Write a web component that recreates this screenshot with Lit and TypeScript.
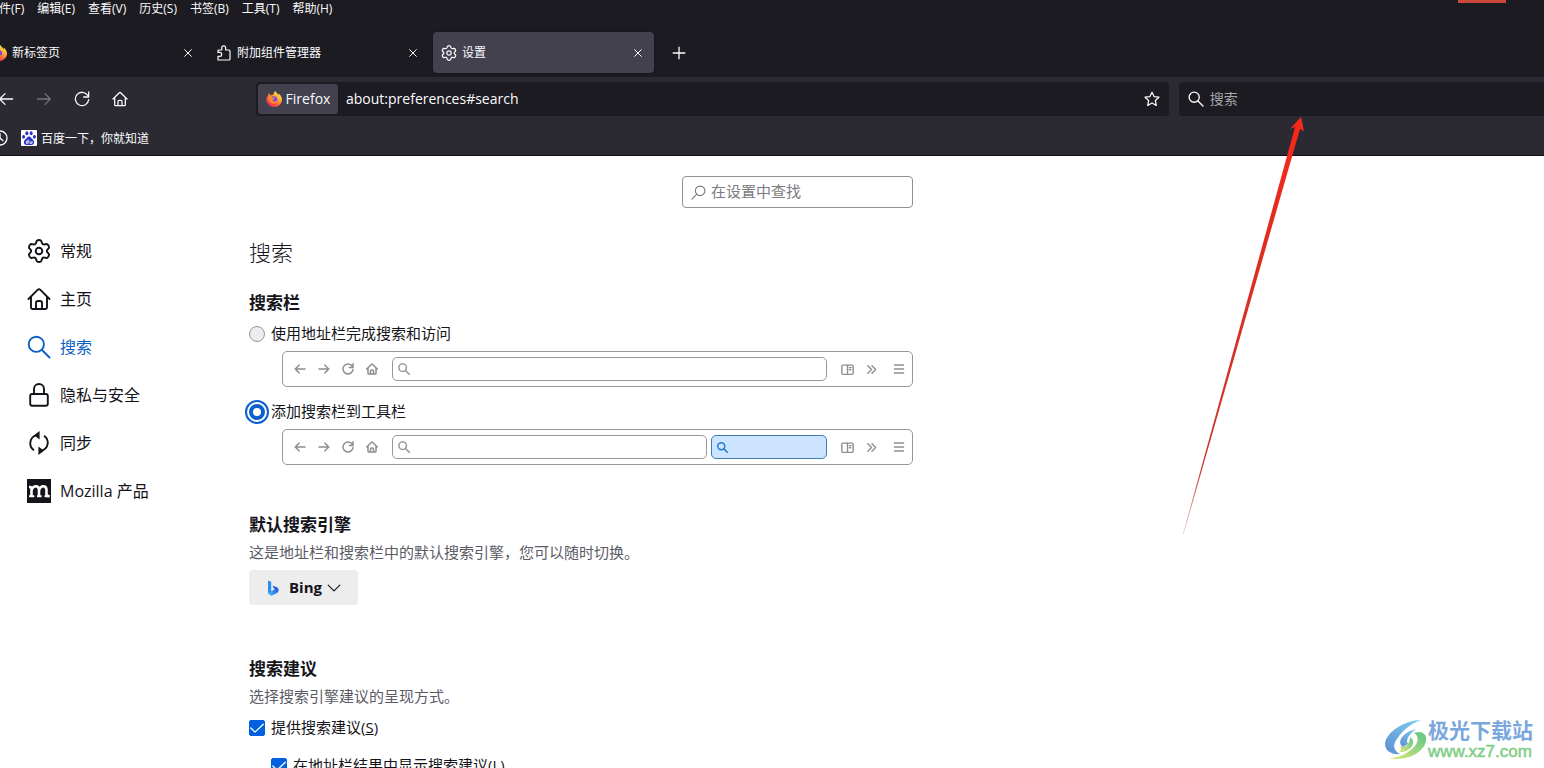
import { LitElement, html, css, svg, nothing } from "lit";
import { customElement, property, state } from "lit/decorators.js";

// Outline of a six-toothed cog on a 24-unit grid.
const cogPath = (() => {
  const at = (deg: number, r: number) => {
    const a = (deg * Math.PI) / 180;
    return `${(12 + r * Math.cos(a)).toFixed(2)} ${(12 + r * Math.sin(a)).toFixed(2)}`;
  };
  let d = "";
  for (let k = 0; k < 6; k++) {
    const c = k * 60 - 90;
    d += `${k ? "L" : "M"}${at(c - 20, 8.6)} L${at(c - 12, 10.5)} Q${at(c, 11.8)} ${at(c + 12, 10.5)} L${at(c + 20, 8.6)} Q${at(c + 30, 7.2)} ${at(c + 40, 8.6)} `;
  }
  return d + "Z";
})();

const shapes: Record<string, unknown> = {
  cog: svg`<path d=${cogPath}/><circle cx="12" cy="12" r="3.3"/>`,
  home: svg`<path d="M1.5 12 L10.6 2.9 Q12 1.6 13.4 2.9 L22.5 12 M4 10 V20.5 Q4 22 5.5 22 H18.5 Q20 22 20 20.5 V10 M9 22 V16 Q9 14 11 14 H13 Q15 14 15 16 V22"/>`,
  search: svg`<circle cx="9.3" cy="9.3" r="7.6"/><path d="M15 15 L22.5 22.5"/>`,
  find: svg`<circle cx="14.6" cy="9.3" r="7.6"/><path d="M9 15 L1.5 22.5"/>`,
  lock: svg`<rect x="3.2" y="11" width="17.6" height="11.8" rx="2"/><path d="M7 11 V6 A5 5 0 0 1 17 6 V11"/>`,
  sync: svg`<path d="M9 4.4 A8.3 8.3 0 0 0 6.4 18.8 M15 19.6 A8.3 8.3 0 0 0 17.6 5.2"/><path class="solid" d="M12.6 0 V8.4 L7 4.2 Z M11.4 15.6 V24 L17 19.8 Z"/>`,
  back: svg`<path d="M22 12 H2.5 M10.5 4 L2.5 12 L10.5 20"/>`,
  forward: svg`<path d="M2 12 H21.5 M13.5 4 L21.5 12 L13.5 20"/>`,
  reload: svg`<path d="M20.5 6.5 A10 10 0 1 0 22 13 M22 1.5 V9 H14.5"/>`,
  star: svg`<path d="M12 1.8 L15.1 8.4 L22.4 9.3 L17 14.3 L18.4 21.7 L12 18.1 L5.6 21.7 L7 14.3 L1.6 9.3 L8.9 8.4 Z"/>`,
  close: svg`<path d="M4 4 L20 20 M20 4 L4 20"/>`,
  plus: svg`<path d="M12 2 V22 M2 12 H22"/>`,
  clock: svg`<circle cx="12" cy="12" r="10.5"/><path d="M12 5.5 V12 L16.5 16"/>`,
  puzzle: svg`<path d="M3 22.5 V17 H5.6 A2.9 2.9 0 0 0 5.6 11.2 H3 V9 Q3 7.5 4.5 7.5 H8.6 V4.3 A2.9 2.9 0 0 1 14.4 4.3 V7.5 H19.5 Q21 7.5 21 9 V21 Q21 22.5 19.5 22.5 Z"/>`,
  chevron: svg`<path d="M2 7 L12 17 L22 7"/>`,
  tick: svg`<path d="M2.8 12 L9 18.2 L21.4 6.4"/>`,
  more: svg`<path d="M4 4 L12 12 L4 20 M13 4 L21 12 L13 20"/>`,
  menu: svg`<path d="M3 4 H21 M3 12 H21 M3 20 H21"/>`,
  reader: svg`<rect x="1.5" y="4" width="21" height="17" rx="2"/><path d="M12 4 V21 M15.5 8.5 H19 M15.5 12.5 H18"/>`,
};

@customElement("ui-icon")
export class UiIcon extends LitElement {
  @property() name = "";
  @property({ type: Number }) size = 16;
  @property({ type: Number }) weight = 2;

  static styles = css`
    :host { display: inline-flex; flex: none; }
    svg { display: block; fill: none; stroke: currentColor; stroke-linecap: round; stroke-linejoin: round; }
    .solid { fill: currentColor; stroke: none; }
  `;

  render() {
    return html`<svg width=${this.size} height=${this.size} viewBox="0 0 24 24" stroke-width=${this.weight} aria-hidden="true">${shapes[this.name]}</svg>`;
  }
}

@customElement("firefox-logo")
export class FirefoxLogo extends LitElement {
  static styles = css`
    :host { display: inline-flex; flex: none; }
    svg { display: block; }
  `;

  render() {
    return html`<svg width="16" height="16" viewBox="0 0 32 32" aria-hidden="true">
      <defs>
        <linearGradient id="flame" x1="0.85" y1="0.1" x2="0.2" y2="0.95">
          <stop offset="0" stop-color="#fff14f"/><stop offset="0.35" stop-color="#ffa931"/>
          <stop offset="0.65" stop-color="#ff5a3c"/><stop offset="1" stop-color="#f0246e"/>
        </linearGradient>
      </defs>
      <path fill="url(#flame)" d="M30 11 C29 8 27 6 25 5 C26 7 26 8 26 9 C24 5 20 4 19 0 C15 3 15 6 15 7 C12 7 10 9 10 9 C8 8 7 5 7 4 C5 6 4 8 4 9 C1 12 0 16 1 20 C3 27 9 32 16 32 C25 32 32 25 32 17 C32 14 31 12 30 11 Z"/>
      <circle cx="16" cy="17" r="6.5" fill="#7a4be0"/>
      <path fill="#ff8a2b" d="M5 12 C9 10 11 12 13 13 C16 13 18 13 18 14 C17 16 14 16 13 18 C14 22 19 22 22 19 C22 24 17 27 12 25 C7 23 4 18 5 12 Z"/>
    </svg>`;
  }
}

@customElement("browser-chrome")
export class BrowserChrome extends LitElement {
  @state() private active = 2;

  private menus = ["件(F)", "编辑(E)", "查看(V)", "历史(S)", "书签(B)", "工具(T)", "帮助(H)"];
  private tabs = [
    { icon: "firefox", label: "新标签页" },
    { icon: "puzzle", label: "附加组件管理器" },
    { icon: "cog", label: "设置" },
  ];

  static styles = css`
    :host { display: block; background: #1c1b22; color: #fbfbfe; font-size: 12px; }
    button, input { font: inherit; color: inherit; background: none; border: 0; padding: 0; margin: 0; outline: 0; }
    button { display: flex; align-items: center; justify-content: center; }
    .menus { display: flex; justify-content: space-between; height: 32px; }
    .menu-list { display: flex; gap: 13px; margin-left: -1px; }
    .menu-list button { height: 18px; line-height: 18px; }
    .window-close { width: 48px; height: 3px; margin-right: 38px; background: #c9493b; }
    .tabs { display: flex; gap: 4px; height: 45px; margin-left: -17px; }
    .tab { display: flex; align-items: center; width: 221px; height: 41px; box-sizing: border-box; padding: 0 8px; border-radius: 4px; }
    .tab.active { background: #42414d; box-shadow: 0 0 2px #0008; }
    .tab .pick { flex: 1; justify-content: flex-start; gap: 5px; height: 100%; }
    .tab .pick span, .chip span { padding-bottom: 2px; }
    .tab .shut { width: 16px; height: 16px; }
    .add { width: 41px; height: 41px; }
    .nav { display: grid; grid-template-columns: 246px minmax(0, 5fr) minmax(0, 2fr); column-gap: 10px; align-items: center; height: 34px; padding-top: 5px; background: #2b2a33; }
    .tools { display: flex; gap: 22px; margin-left: -2px; }
    .tools .off { color: #75747e; }
    .bar { display: flex; align-items: center; height: 34px; box-sizing: border-box; background: #1c1b22; border-radius: 4px; font-size: 14px; }
    .address { padding: 0 9px 0 2px; }
    .chip { gap: 4px; width: 80px; height: 30px; border-radius: 3px; background: #42414d; margin-right: 8px; }
    .bar input { flex: 1; min-width: 0; padding-bottom: 2px; }
    .query { padding: 0 9px; gap: 6px; border-radius: 4px 0 0 4px; }
    .query input::placeholder { color: #a5a5aa; opacity: 1; }
    .marks { display: flex; align-items: center; gap: 13px; height: 35px; padding-top: 4px; background: #2b2a33; border-bottom: 1px solid #0c0c0d; }
    .marks .history { margin-left: -8px; }
    .marks a { display: flex; align-items: center; gap: 4px; color: inherit; text-decoration: none; }
    .paw { display: block; }
  `;

  render() {
    return html`
      <div class="menus">
        <div class="menu-list">${this.menus.map((m) => html`<button>${m}</button>`)}</div>
        <div class="window-close"></div>
      </div>
      <div class="tabs">
        ${this.tabs.map((t, i) => html`
          <div class="tab ${i === this.active ? "active" : ""}">
            <button class="pick" @click=${() => (this.active = i)}>
              ${t.icon === "firefox" ? html`<firefox-logo></firefox-logo>` : html`<ui-icon name=${t.icon} weight="1.8"></ui-icon>`}
              <span>${t.label}</span>
            </button>
            <button class="shut" aria-label="关闭标签页"><ui-icon name="close" size="10" weight="2.4"></ui-icon></button>
          </div>`)}
        <button class="add" aria-label="新建标签页"><ui-icon name="plus" size="14" weight="2.2"></ui-icon></button>
      </div>
      <div class="nav">
        <div class="tools">
          <button aria-label="后退"><ui-icon name="back" weight="1.9"></ui-icon></button>
          <button class="off" aria-label="前进"><ui-icon name="forward" weight="1.9"></ui-icon></button>
          <button aria-label="重新载入"><ui-icon name="reload" weight="1.9"></ui-icon></button>
          <button aria-label="主页"><ui-icon name="home" weight="1.9"></ui-icon></button>
        </div>
        <div class="bar address">
          <button class="chip"><firefox-logo></firefox-logo><span>Firefox</span></button>
          <input aria-label="网址" .value=${"about:preferences#search"} />
          <button aria-label="添加书签"><ui-icon name="star" weight="1.9"></ui-icon></button>
        </div>
        <div class="bar query">
          <ui-icon name="search" weight="2"></ui-icon>
          <input aria-label="搜索" placeholder="搜索" />
        </div>
      </div>
      <div class="marks">
        <ui-icon class="history" name="clock" weight="2"></ui-icon>
        <a href="#baidu">
          <svg class="paw" width="16" height="16" viewBox="0 0 16 16" aria-hidden="true">
            <rect width="16" height="16" rx="1" fill="#fff"/>
            <g fill="#2932c8"><ellipse cx="5.8" cy="3.2" rx="1.5" ry="2"/><ellipse cx="10.2" cy="3.2" rx="1.5" ry="2"/><ellipse cx="2.6" cy="6.8" rx="1.5" ry="1.9"/><ellipse cx="13.4" cy="6.8" rx="1.5" ry="1.9"/>
            <path d="M8 6.5 C9.8 6.5 10.3 8.5 12 9.8 C14.2 11.8 13 15 10.6 15 C9 15 7 14.8 5.4 15 C3 15 1.8 11.8 4 9.8 C5.7 8.5 6.2 6.5 8 6.5 Z"/></g>
            <path d="M7.2 9.5 V13.3 H5.4 V11.3 H7 M9 11 V13.3 H11 V11" fill="none" stroke="#fff" stroke-width="0.9"/>
          </svg>百度一下，你就知道</a>
      </div>`;
  }
}

@customElement("toolbar-sketch")
export class ToolbarSketch extends LitElement {
  @property({ type: Boolean }) split = false;

  static styles = css`
    :host { display: block; color: #8f8f94; }
    .frame { display: flex; align-items: center; height: 36px; box-sizing: border-box; padding: 0 7px 0 11px; border: 1px solid #96969b; border-radius: 5px; }
    .keys { display: flex; gap: 12px; padding-right: 14px; }
    .field { display: flex; align-items: center; flex: 1; height: 24px; box-sizing: border-box; padding-left: 5px; border: 1px solid #96969b; border-radius: 5px; }
    .field.added { flex: none; width: 116px; margin-left: 4px; color: #1c78d4; border-color: #3a7fae; background: #cce4ff; }
    .side { display: flex; align-items: center; gap: 12px; padding-left: 14px; }
    .last { margin-left: 4px; }
  `;

  render() {
    return html`<div class="frame">
      <div class="keys">${["back", "forward", "reload", "home"].map((n) => html`<ui-icon name=${n} size="12" weight="3"></ui-icon>`)}</div>
      <div class="field"><ui-icon name="search" size="12" weight="2.8"></ui-icon></div>
      ${this.split ? html`<div class="field added"><ui-icon name="search" size="11" weight="3.2"></ui-icon></div>` : nothing}
      <div class="side">
        <ui-icon name="reader" size="13" weight="2.6"></ui-icon>
        <ui-icon name="more" size="11" weight="3.2"></ui-icon>
        <ui-icon class="last" name="menu" size="12" weight="3"></ui-icon>
      </div>
    </div>`;
  }
}

@customElement("app-root")
export class AppRoot extends LitElement {
  private sections = [
    { icon: "cog", label: "常规" },
    { icon: "home", label: "主页" },
    { icon: "search", label: "搜索" },
    { icon: "lock", label: "隐私与安全" },
    { icon: "sync", label: "同步" },
    { icon: "mozilla", label: "Mozilla 产品" },
  ];

  static styles = css`
    :host { display: flex; flex-direction: column; position: relative; height: 100vh; overflow: hidden; background: #fff; color: #15141a; font-family: "Open Sans", "Noto Sans CJK SC", sans-serif; font-size: 15px; }
    browser-chrome { flex: none; }
    .page { display: flex; flex: 1; min-height: 0; overflow: hidden; }
    nav { flex: none; width: 249px; box-sizing: border-box; padding: 71px 0 0 27px; }
    nav a { display: flex; align-items: center; gap: 9px; height: 48px; color: inherit; text-decoration: none; font-size: 16px; }
    nav a span { padding-bottom: 2px; }
    nav a.here { color: #0c61c4; }
    .moz { display: flex; width: 24px; height: 24px; }
    main { flex: 0 1 664px; min-width: 0; padding-top: 20px; }
    .find { display: flex; align-items: center; gap: 5px; width: 231px; height: 32px; box-sizing: border-box; margin-left: auto; padding-left: 8px; border: 1px solid #8f8f94; border-radius: 4px; color: #7a7a80; }
    .find input { flex: 1; min-width: 0; border: 0; outline: 0; padding: 0 0 2px; background: none; font: inherit; }
    .find input::placeholder { color: #7a7a80; opacity: 1; }
    h1 { margin: 27px 0 22px; font-size: 22px; font-weight: 300; line-height: 34px; }
    h2 { margin: 0; font-size: 17px; font-weight: 700; line-height: 24px; }
    .choice { display: flex; align-items: center; gap: 6px; height: 26px; margin-top: 6px; }
    .choice.next { margin-top: 12px; }
    .choice.first { margin-top: 8px; }
    .choice label { padding-bottom: 3px; }
    .choice input { appearance: none; flex: none; width: 16px; height: 16px; margin: 0; box-sizing: border-box; }
    input[type="radio"] { border: 1px solid #96969b; border-radius: 50%; background: #ededf0; }
    input[type="radio"]:checked { border: 4px solid #0b5fd0; background: #fff; outline: 2px solid #0b5fd0; outline-offset: 2px; }
    input[type="checkbox"] { border: 1px solid #8f8f9d; border-radius: 2px; }
    .tick { display: grid; flex: none; }
    .tick > * { grid-area: 1 / 1; place-self: center; }
    .tick ui-icon { color: #fff; pointer-events: none; }
    .tick input:checked { background: #0060df; border-color: #0060df; }
    .nested { margin-left: 22px; }
    toolbar-sketch { margin: 4px 0 0 33px; }
    .group { margin-top: 48px; }
    .group.late { margin-top: 52px; }
    .note { margin: 4px 0 0; line-height: 22px; color: #5b5b66; }
    .engine { display: inline-grid; grid-template-columns: 40px auto 34px; align-items: center; height: 35px; margin-top: 7px; border-radius: 4px; background: #ededed; }
    .engine select { grid-area: 1 / 1 / 2 / 4; appearance: none; width: 109px; height: 35px; padding: 0 0 2px 40px; border: 0; border-radius: 4px; background: none; color: inherit; font: inherit; font-weight: 700; }
    .engine .bing { grid-area: 1 / 1; margin-left: 17px; pointer-events: none; }
    .engine ui-icon { grid-area: 1 / 3; margin-left: 3px; pointer-events: none; }
    .pointer { position: absolute; top: 112px; left: 1178px; pointer-events: none; }
    .stamp { position: absolute; right: 11px; bottom: 7px; display: flex; align-items: center; gap: 1px; }
    .stamp .lines { display: flex; flex-direction: column; }
    .stamp b { font-size: 21px; line-height: 24px; color: #7aa7dc; }
    .stamp span { font-family: "Liberation Sans", sans-serif; font-size: 17px; line-height: 19px; color: #7fce85; -webkit-text-stroke: 0.5px #7fce85; }
  `;

  private mozilla() {
    return html`<svg class="moz" viewBox="0 0 24 24" aria-hidden="true">
      <rect width="24" height="24" fill="#15141a"/>
      <path fill="none" stroke="#fff" stroke-width="2.6" d="M4.5 17 V9.5 Q4.5 8 3 8 H2 M4.5 11 Q6 7.2 8.8 7.2 Q12 7.2 12 11 V17 M12 11 Q13.5 7.2 16.2 7.2 Q19.5 7.2 19.5 11 V15.5 Q19.5 17 21 17 H22.5"/>
      <path stroke="#fff" stroke-width="2" d="M2 17.2 H7.4 M10 17.2 H14.6 M17.5 17.2 H22.5"/>
    </svg>`;
  }

  private check(id: string, label: string, key: string, extra: string) {
    return html`<div class="choice ${extra}">
      <span class="tick"><input type="checkbox" id=${id} checked /><ui-icon name="tick" size="16" weight="2"></ui-icon></span>
      <label for=${id}>${label}(<u>${key}</u>)</label>
    </div>`;
  }

  render() {
    return html`
      <browser-chrome></browser-chrome>
      <div class="page">
        <nav>
          ${this.sections.map((s) => html`<a href="#${s.icon}" class=${s.icon === "search" ? "here" : ""}>
            ${s.icon === "mozilla" ? this.mozilla() : html`<ui-icon name=${s.icon} size="24" weight="1.9"></ui-icon>`}
            <span>${s.label}</span></a>`)}
        </nav>
        <main>
          <div class="find"><ui-icon name="find" size="15" weight="1.8"></ui-icon><input type="text" aria-label="在设置中查找" placeholder="在设置中查找" /></div>
          <h1>搜索</h1>
          <section>
            <h2>搜索栏</h2>
            <div class="choice"><input type="radio" name="bar" id="single" /><label for="single">使用地址栏完成搜索和访问</label></div>
            <toolbar-sketch></toolbar-sketch>
            <div class="choice next"><input type="radio" name="bar" id="both" checked /><label for="both">添加搜索栏到工具栏</label></div>
            <toolbar-sketch split></toolbar-sketch>
          </section>
          <section class="group">
            <h2>默认搜索引擎</h2>
            <p class="note">这是地址栏和搜索栏中的默认搜索引擎，您可以随时切换。</p>
            <div class="engine">
              <select aria-label="默认搜索引擎"><option>Bing</option></select>
              <svg class="bing" width="16" height="16" viewBox="0 0 16 16" aria-hidden="true">
                <defs><linearGradient id="wave" x1="0" y1="1" x2="1" y2="0.4"><stop offset="0" stop-color="#4fd0f5"/><stop offset="1" stop-color="#1d55d8"/></linearGradient></defs>
                <path fill="#2f8ff0" d="M2 0.5 L5.2 1.8 V12 L2 14 Z"/>
                <path fill="url(#wave)" d="M2 13 L5.2 11.2 L9 9.3 L7.6 8.6 L6.5 5.4 L11 7.2 Q12.8 8.2 12.6 10.5 Q12.4 12 11 13 L6.2 15.6 Q3.6 16.2 2 13 Z"/>
              </svg>
              <ui-icon name="chevron" size="14" weight="2"></ui-icon>
            </div>
          </section>
          <section class="group late">
            <h2>搜索建议</h2>
            <p class="note">选择搜索引擎建议的呈现方式。</p>
            ${this.check("suggest", "提供搜索建议", "S", "first")}
            ${this.check("inline", "在地址栏结果中显示搜索建议", "L", "nested next")}
          </section>
        </main>
      </div>
      <svg class="pointer" width="132" height="426" viewBox="0 0 132 426" aria-hidden="true">
        <defs><linearGradient id="fade" x1="0" y1="1" x2="0" y2="0">
          <stop offset="0" stop-color="#c8382e" stop-opacity="0.4"/><stop offset="0.15" stop-color="#c8382e"/>
          <stop offset="0.7" stop-color="#e02c20"/><stop offset="1" stop-color="#f8281a"/>
        </linearGradient></defs>
        <path fill="url(#fade)" d="M123 5 L126 19 L122 17 L5.5 422 L5 422 L117 15 L112 17 Z"/>
      </svg>
      <div class="stamp">
        <svg width="42" height="42" viewBox="0 0 42 42" aria-hidden="true">
          <defs>
            <linearGradient id="sky" x1="0" y1="1" x2="1" y2="0"><stop offset="0" stop-color="#5a8fd0"/><stop offset="1" stop-color="#85cdf2"/></linearGradient>
            <linearGradient id="leaf" x1="0" y1="1" x2="1" y2="0"><stop offset="0" stop-color="#dfe873"/><stop offset="1" stop-color="#5fc58a"/></linearGradient>
          </defs>
          <path fill="url(#sky)" d="M36 1 C20 1 1 13 0 25 C0 32 7 36 15 35 C9 32 7 26 12 20 C17 12 25 5 36 1 Z"/>
          <path fill="url(#sky)" d="M18 28 C11 23 18 13 31 10 C25 15 20 20 23 25 Z"/>
          <path fill="url(#leaf)" d="M4 39 C20 43 39 34 41 22 C42 15 37 11 29 14 C35 18 33 25 27 30 C20 36 12 39 4 39 Z"/>
          <path fill="url(#leaf)" d="M15 27 C19 30 25 26 25 18 C33 24 24 34 14 33 C17 31 16 29 15 27 Z"/>
        </svg>
        <div class="lines"><b>极光下载站</b><span>www.xz7.com</span></div>
      </div>`;
  }
}
